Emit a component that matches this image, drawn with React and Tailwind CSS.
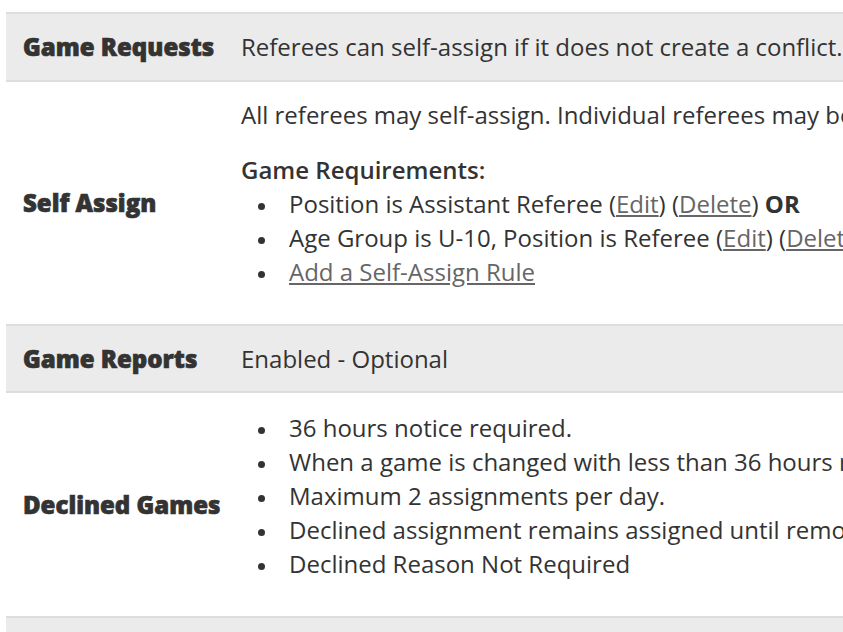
import React from "react";

const Label = ({ children }) => (
  <div className="flex items-center pl-[17px] font-extrabold [-webkit-text-stroke:0.7px_#333]">
    {children}
  </div>
);

const Link = ({ children }) => (
  <a href="#" className="text-[#666] underline underline-offset-2">
    {children}
  </a>
);

const Item = ({ children }) => (
  <li className="flex items-center">
    <span className="w-[7px] h-[7px] rounded-full bg-[#333] shrink-0 mr-[24px] translate-y-[2px]" />
    <span>{children}</span>
  </li>
);

export default function App() {
  return (
    <div
      className="w-[843px] h-[632px] overflow-hidden bg-white pt-[12px] pl-[6px] text-[24px] leading-[34px] text-[#333] whitespace-nowrap"
      style={{ fontFamily: "'Open Sans', 'Liberation Sans', sans-serif" }}
    >
      <div className="w-[1100px] border-t-2 border-[#dddddd]">
        {/* GAME REQUESTS */}
        <div className="grid grid-cols-[219px_1fr] h-[68px] bg-[#ebebeb] border-b-2 border-[#dddddd]">
          <Label>Game Requests</Label>
          <div className="flex items-center pl-[16px]">
            Referees can self-assign if it does not create a conflict.
          </div>
        </div>

        {/* SELF ASSIGN */}
        <div className="grid grid-cols-[219px_1fr] h-[244px] border-b-2 border-[#dddddd]">
          <Label>Self Assign</Label>
          <div className="pl-[16px] pt-[16px]">
            <p>
              All referees may self-assign. Individual referees may be restricted from self-assigning.
            </p>
            <p className="mt-[21px] font-semibold">Game Requirements:</p>
            <ul className="pl-[17px]">
              <Item>
                Position is Assistant Referee (<Link>Edit</Link>) (<Link>Delete</Link>){" "}
                <span className="font-bold">OR</span>
              </Item>
              <Item>
                Age Group is U-10, Position is Referee (<Link>Edit</Link>) (<Link>Delete</Link>)
              </Item>
              <Item>
                <Link>Add a Self-Assign Rule</Link>
              </Item>
            </ul>
          </div>
        </div>

        {/* GAME REPORTS */}
        <div className="grid grid-cols-[219px_1fr] h-[67px] bg-[#ebebeb] border-b-2 border-[#dddddd]">
          <Label>Game Reports</Label>
          <div className="flex items-center pl-[16px]">Enabled - Optional</div>
        </div>

        {/* DECLINED GAMES */}
        <div className="grid grid-cols-[219px_1fr] h-[225px] border-b-2 border-[#dddddd]">
          <Label>Declined Games</Label>
          <div className="pl-[16px] pt-[18px]">
            <ul className="pl-[17px]">
              <Item>36 hours notice required.</Item>
              <Item>When a game is changed with less than 36 hours notice, the referee may decline.</Item>
              <Item>Maximum 2 assignments per day.</Item>
              <Item>Declined assignment remains assigned until removed by an assignor.</Item>
              <Item>Declined Reason Not Required</Item>
            </ul>
          </div>
        </div>

        <div className="h-[40px] bg-[#ebebeb]" />
      </div>
    </div>
  );
}
